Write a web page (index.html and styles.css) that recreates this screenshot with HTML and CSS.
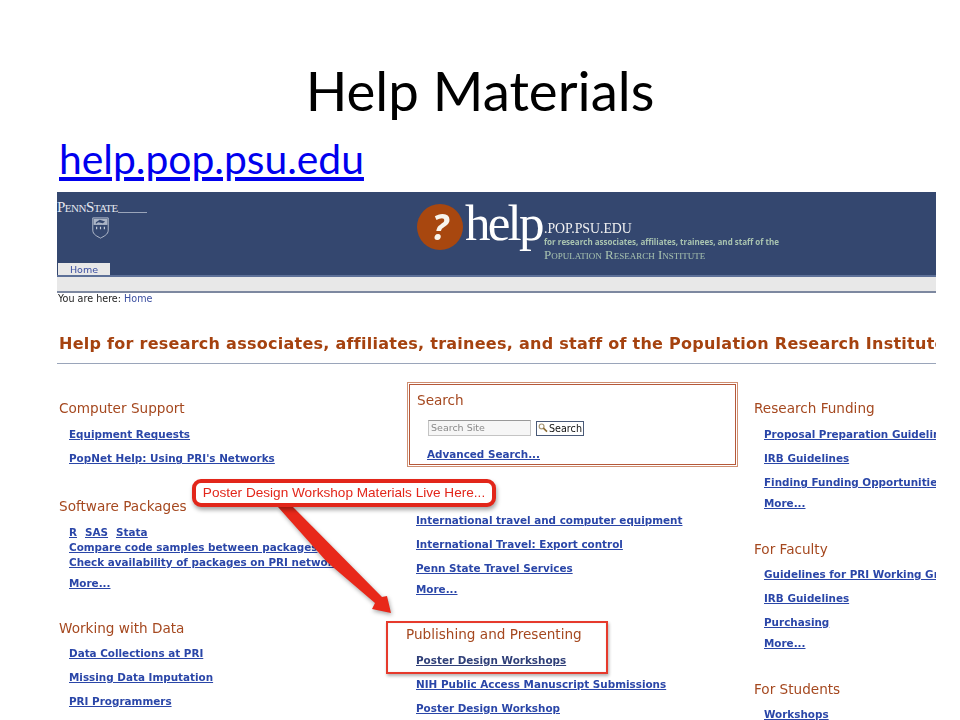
FILE: index.html
```html
<!DOCTYPE html>
<html lang="en">
<head>
    <meta charset="UTF-8">
    <title>Help Materials</title>
    <link rel="stylesheet" href="styles.css">
</head>
<body>

<div class="slide">
    <h1 class="slide-title">Help Materials</h1>
    <p class="slide-link"><a href="#">help.pop.psu.edu</a></p>

    <!-- Screenshot of the help site -->
    <div class="shot">
        <div class="site-header">
            <div class="psu">
                <div class="psu-name">PennState</div>
                <svg class="psu-shield" width="17" height="22" viewBox="0 0 22 25" preserveAspectRatio="none">
                    <path d="M1 1H21V15C21 20 15 22 11 24C7 22 1 20 1 15Z" fill="none" stroke="#c9d0dc" stroke-width="1"/>
                    <path d="M2 2H20V9H2Z" fill="#aab4c6"/>
                    <path d="M5 6L10 3L17 5L14 7L8 6L5 8Z" fill="#34476f"/>
                    <path d="M6 11V14M11 11V14M16 11V14" stroke="#c9d0dc" stroke-width="1.5"/>
                </svg>
                <div class="tab"><a href="#">Home</a></div>
            </div>
            <div class="help-logo">
                <div class="help-mark">?</div>
                <div class="help-word">help</div>
                <div class="help-text">
                    <div class="help-domain">.POP.PSU.EDU</div>
                    <div class="help-tag">for research associates, affiliates, trainees, and staff of the</div>
                    <div class="help-inst">Population Research Institute</div>
                </div>
            </div>
        </div>
        <div class="site-bar"></div>
        <div class="crumbs">You are here: <a href="#">Home</a></div>
        <h2 class="site-title">Help for research associates, affiliates, trainees, and staff of the Population Research Institute</h2>

        <div class="columns">
            <div class="col col-left">
                <div class="group short">
                    <h3>Computer Support</h3>
                    <a class="item" href="#">Equipment Requests</a>
                    <a class="item" href="#">PopNet Help: Using PRI's Networks</a>
                </div>
                <div class="group">
                    <h3>Software Packages</h3>
                    <div class="item tight"><a href="#">R</a><a href="#">SAS</a><a href="#">Stata</a></div>
                    <a class="item tight" href="#">Compare code samples between packages</a>
                    <a class="item tight" href="#">Check availability of packages on PRI network</a>
                    <a class="item more" href="#">More...</a>
                </div>
                <div class="group">
                    <h3>Working with Data</h3>
                    <a class="item near" href="#">Data Collections at PRI</a>
                    <a class="item" href="#">Missing Data Imputation</a>
                    <a class="item" href="#">PRI Programmers</a>
                    <a class="item" href="#">More...</a>
                </div>
            </div>

            <div class="col col-mid">
                <div class="search-box">
                    <h3>Search</h3>
                    <div class="search-row">
                        <div class="search-input">Search Site</div>
                        <div class="search-btn">
                            <svg width="10" height="10" viewBox="0 0 10 10">
                                <circle cx="3.6" cy="3.4" r="2.4" fill="none" stroke="#a89878" stroke-width="1.2"/>
                                <path d="M5.4 5.2L9 8.6" stroke="#8a6a30" stroke-width="1.6"/>
                            </svg>
                            Search
                        </div>
                    </div>
                    <a class="item" href="#">Advanced Search...</a>
                </div>
                <div class="group">
                    <h3>Travel</h3>
                    <a class="item" href="#">International travel and computer equipment</a>
                    <a class="item" href="#">International Travel: Export control</a>
                    <a class="item" href="#">Penn State Travel Services</a>
                    <a class="item more" href="#">More...</a>
                </div>
                <div class="group">
                    <h3>Publishing and Presenting</h3>
                    <a class="item dark" href="#">Poster Design Workshops</a>
                    <a class="item" href="#">NIH Public Access Manuscript Submissions</a>
                    <a class="item" href="#">Poster Design Workshop</a>
                </div>
            </div>

            <div class="col col-right">
                <div class="group">
                    <h3>Research Funding</h3>
                    <a class="item" href="#">Proposal Preparation Guidelines</a>
                    <a class="item" href="#">IRB Guidelines</a>
                    <a class="item" href="#">Finding Funding Opportunities</a>
                    <a class="item more" href="#">More...</a>
                </div>
                <div class="group">
                    <h3>For Faculty</h3>
                    <a class="item near" href="#">Guidelines for PRI Working Groups</a>
                    <a class="item" href="#">IRB Guidelines</a>
                    <a class="item" href="#">Purchasing</a>
                    <a class="item more" href="#">More...</a>
                </div>
                <div class="group">
                    <h3>For Students</h3>
                    <a class="item near" href="#">Workshops</a>
                </div>
            </div>
        </div>

        <!-- Annotations drawn on top of the screenshot -->
        <svg class="arrow" width="120" height="112" viewBox="0 0 120 112">
            <path d="M1 1H16L105 91L110 90L114 107L95 103L98 97L50 56Z" fill="#e8281a"/>
        </svg>
        <div class="callout">Poster Design Workshop Materials Live Here...</div>
        <div class="highlight"></div>
    </div>
</div>

</body>
</html>
```

FILE: styles.css
```css
html, body {
    margin: 0;
    height: 720px;
    overflow: hidden;
    background-color: white;
}
.slide {
    height: 720px;
    overflow: hidden;
}
.slide-title {
    margin: 0;
    padding-top: 58px;
    font-family: Lato, sans-serif;
    font-weight: normal;
    font-size: 54.6px;
    line-height: 64px;
    text-align: center;
    color: black;
}
.slide-link {
    margin: 0;
    padding: 14px 0 0 59px;
    height: 70px;
    box-sizing: border-box;
    font-family: Lato, sans-serif;
    font-size: 40.8px;
    line-height: 46px;
}
.slide-link a {
    color: #0000ee;
}

/* screenshot */
.shot {
    position: relative;
    width: 879px;
    height: 528px;
    margin-left: 57px;
    overflow: hidden;
    font-family: "DejaVu Sans", sans-serif;
    white-space: nowrap;
    filter: blur(0.35px);
}
.site-header {
    display: flex;
    height: 83px;
    background-color: #34476f;
}
.psu {
    display: flex;
    flex-direction: column;
    align-items: flex-start;
    width: 360px;
}
.psu-name {
    display: flex;
    width: 90px;
    margin-top: 8px;
    font-family: "Liberation Serif", serif;
    font-variant: small-caps;
    font-size: 15px;
    line-height: 14px;
    color: #e6e9ef;
    letter-spacing: -0.5px;
}
.psu-name::after {
    content: "";
    flex: 1;
    height: 1px;
    align-self: flex-end;
    margin-bottom: 1px;
    background-color: #9aa5ba;
}
.psu-shield {
    margin: 3px 0 0 35px;
}
.tab {
    margin: auto 0 0 1px;
    width: 52px;
    height: 12px;
    background-color: #e8e8e8;
    font-size: 9.5px;
    line-height: 13px;
    text-align: center;
}
.tab a {
    color: #3a4ea0;
    text-decoration: none;
}
.help-logo {
    display: flex;
    height: 83px;
}
.help-mark {
    width: 46px;
    height: 46px;
    margin-top: 12px;
    border-radius: 50%;
    background-color: #a8470f;
    font-family: "Open Sans", sans-serif;
    font-weight: bold;
    font-style: italic;
    font-size: 36px;
    line-height: 46px;
    text-align: center;
    color: #f8f4ec;
}
.help-word {
    margin-left: 2px;
    width: 79px;
    font-family: "Liberation Serif", serif;
    font-size: 51px;
    line-height: 62px;
    letter-spacing: -2.8px;
    color: white;
}
.help-text {
    padding-top: 30px;
}
.help-domain {
    font-family: "Liberation Serif", serif;
    font-size: 13.8px;
    line-height: 14px;
    color: #f2f2f2;
}
.help-tag {
    font-family: "Open Sans", sans-serif;
    font-weight: bold;
    font-size: 8px;
    line-height: 11px;
    color: #a9c4b0;
}
.help-inst {
    font-family: "Liberation Serif", serif;
    font-variant: small-caps;
    font-size: 13px;
    line-height: 15px;
    color: #a9c4b0;
}
.site-bar {
    height: 14px;
    border-top: 2px solid #5d7098;
    border-bottom: 2px solid #7d88a0;
    background-color: #e8e8e8;
}
.crumbs {
    padding-left: 1px;
    font-size: 9.6px;
    line-height: 12px;
    color: #222;
}
.crumbs a {
    color: #3a4ea0;
    text-decoration: none;
}
.site-title {
    margin: 29px 0 0;
    padding: 0 0 9px 2px;
    border-bottom: 1px solid #9aa5ba;
    font-size: 16px;
    line-height: 20px;
    font-weight: bold;
    letter-spacing: 0.26px;
    color: #a5420f;
}

.columns {
    display: flex;
    margin-top: 34px;
}
.col-left {
    width: 350px;
    flex: none;
    padding: 0 0 0 2px;
    box-sizing: border-box;
}
.col-mid {
    width: 347px;
    flex: none;
    margin-top: -16px;
}
.col-right {
    flex: none;
}
h3 {
    margin: 0;
    font-size: 13.6px;
    line-height: 20px;
    font-weight: normal;
    color: #a5481f;
}
.group {
    margin-bottom: 26px;
}
.col-left .group {
    margin-bottom: 25px;
}
.col-left .group.short {
    margin-bottom: 28px;
}
.item {
    display: block;
    margin: 4px 0 0 10px;
    font-size: 10.4px;
    line-height: 20px;
    font-weight: bold;
    color: #2a46a8;
    text-decoration: underline;
}
.item a {
    color: #2a46a8;
}
h3 + .item {
    margin-top: 6px;
}
h3 + .item.near {
    margin-top: 5px;
}
.item.tight {
    margin-top: 0;
    line-height: 15px;
}
h3 + .item.tight {
    margin-top: 9px;
}
.item.tight a + a {
    margin-left: 8px;
}
.item.more {
    margin-top: 1px;
}
.item.tight + .item.more {
    margin-top: 3px;
}
.item.dark {
    color: #2f3f78;
}
.col-mid .group {
    margin-left: -1px;
    margin-bottom: 25px;
}

.search-box {
    box-sizing: border-box;
    width: 327px;
    height: 81px;
    margin: 2px 0 19px 2px;
    padding: 5px 0 0 7px;
    border: 1px solid #b5593a;
    box-shadow: 0 0 0 1px white, 0 0 0 2px #cf8f72;
}
.search-row {
    display: flex;
    align-items: center;
    gap: 5px;
    margin: 10px 0 0 11px;
}
.search-input {
    box-sizing: border-box;
    width: 103px;
    height: 16px;
    padding-left: 2px;
    border: 1px solid #c4c4c4;
    border-top-color: #999;
    background-color: #f6f6f6;
    font-size: 9.5px;
    line-height: 14px;
    color: #8a8a8a;
}
.search-btn {
    display: flex;
    align-items: center;
    gap: 1px;
    box-sizing: border-box;
    height: 15px;
    padding: 0 1px;
    border: 1px solid #4a5a78;
    font-size: 9.6px;
    color: #111;
}
.search-box .item {
    margin: 8px 0 0 10px;
}

.arrow {
    position: absolute;
    left: 220px;
    top: 314px;
    filter: drop-shadow(1px 2px 2px rgba(0, 0, 0, 0.35));
}
.callout {
    position: absolute;
    left: 135px;
    top: 287px;
    box-sizing: border-box;
    width: 304px;
    height: 28px;
    border: 4px solid #e2261a;
    border-radius: 9px;
    background-color: white;
    box-shadow: 1px 3px 4px rgba(0, 0, 0, 0.35);
    font-family: "Liberation Sans", sans-serif;
    font-size: 13.6px;
    line-height: 20px;
    text-align: center;
    color: #e2261a;
}
.highlight {
    position: absolute;
    left: 329px;
    top: 429px;
    box-sizing: border-box;
    width: 222px;
    height: 53px;
    border: 2px solid #e63a2c;
    box-shadow: 1px 2px 3px rgba(0, 0, 0, 0.3), inset 0 0 2px rgba(0, 0, 0, 0.1);
}
```
